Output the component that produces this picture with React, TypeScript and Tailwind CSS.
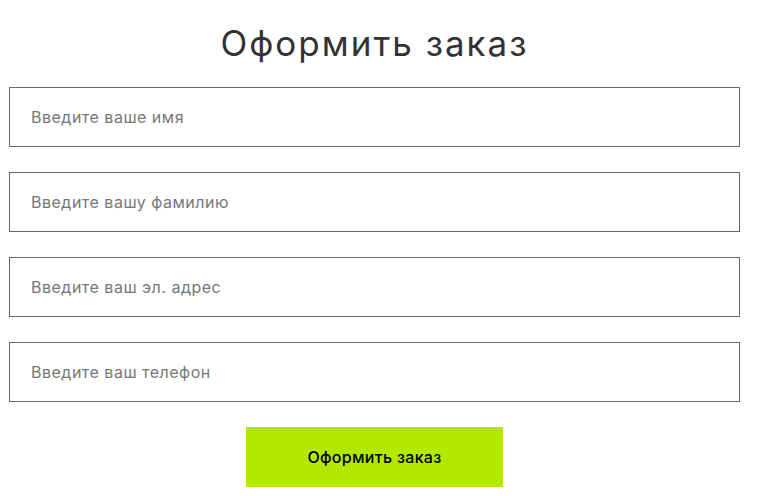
export default function App() {
  const fields = [
    'Введите ваше имя',
    'Введите вашу фамилию',
    'Введите ваш эл. адрес',
    'Введите ваш телефон',
  ]

  return (
    <div className="min-h-[496px] bg-white font-['Inter',sans-serif]">
      <form className="ml-[9px] w-[731px] flex flex-col items-center pt-[18px]">
        <h2 className="text-[35px] leading-[50px] text-[#333] tracking-[2px] mb-[19px]">Оформить заказ</h2>

        <div className="w-full flex flex-col gap-[25px]">
          {fields.map((f) => (
            <input
              key={f}
              type="text"
              placeholder={f}
              className="w-full h-[60px] border border-[#666] px-[21px] text-[16px] tracking-[0.5px] text-[#333] placeholder:text-[#777] outline-none"
            />
          ))}
        </div>

        <button
          type="button"
          className="mt-[25px] w-[257px] h-[60px] bg-[#b3e900] text-black text-[16px] tracking-[0.3px] font-medium"
        >
          Оформить заказ
        </button>
      </form>
    </div>
  )
}
